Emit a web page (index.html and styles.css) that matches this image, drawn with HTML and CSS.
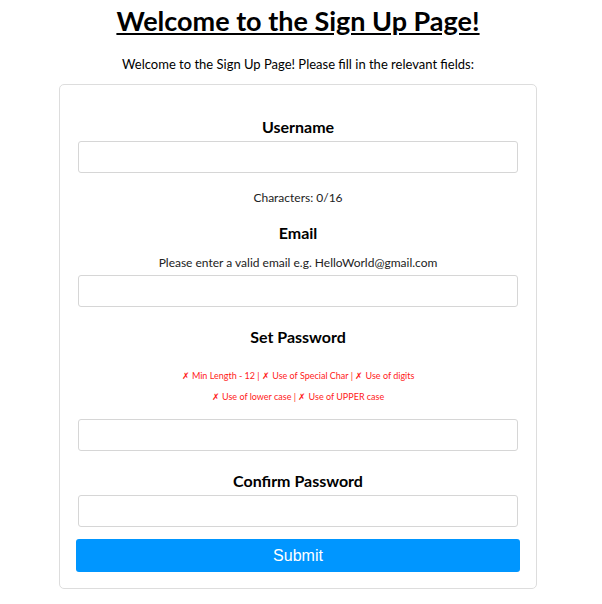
FILE: index.html
```html
<!DOCTYPE html>
<html lang="en">
<head>
    <meta charset="UTF-8">
    <meta name="viewport" content="width=device-width, initial-scale=1.0">
    <title>Sign Up</title>
    <link rel="stylesheet" href="styles.css">
</head>
<body>
    <h1>Welcome to the Sign Up Page!</h1>
    <p class="intro">Welcome to the Sign Up Page! Please fill in the relevant fields:</p>

    <form class="signup" onsubmit="return false">
        <label for="username" class="first">Username</label>
        <input type="text" id="username" name="username" maxlength="16">
        <p class="hint count">Characters: 0/16</p>

        <label for="email" class="gap-sm">Email</label>
        <p class="hint tip">Please enter a valid email e.g. HelloWorld@gmail.com</p>
        <input type="email" id="email" name="email" class="tight">

        <label for="password">Set Password</label>
        <div class="rules">
            <div>✗ Min Length - 12 | ✗ Use of Special Char | ✗ Use of digits</div>
            <div>✗ Use of lower case | ✗ Use of UPPER case</div>
        </div>
        <input type="password" id="password" name="password" class="after-rules">

        <label for="confirm">Confirm Password</label>
        <input type="password" id="confirm" name="confirm">

        <button type="submit">Submit</button>
    </form>
</body>
</html>
```

FILE: styles.css
```css
body {
    font-family: Lato, "Open Sans", sans-serif;
    margin: 0;
    padding: 0 6px 0 0;
    color: #000;
}
h1 {
    font-size: 27px;
    line-height: 42px;
    margin: 0;
    text-align: center;
    text-decoration: underline;
    font-weight: bold;
}
.intro {
    font-size: 13px;
    line-height: 20px;
    margin: 12px 0 0;
    text-align: center;
}
.signup {
    width: 444px;
    margin: 10px auto 0;
    padding: 16px;
    border: 1px solid #ddd;
    border-radius: 5px;
    display: flex;
    flex-direction: column;
}
.signup label {
    display: block;
    text-align: center;
    font-weight: bold;
    font-size: 16px;
    line-height: 20px;
    margin-top: 20px;
}
.signup label.first {
    margin-top: 16px;
}
.signup label.gap-sm {
    margin-top: 16px;
}
.signup input {
    box-sizing: border-box;
    height: 32px;
    margin: 4px 2px 0;
    padding: 4px 8px;
    border: 1px solid #d6d6d6;
    border-radius: 3px;
    font-size: 14px;
}
.signup input.tight {
    margin-top: 3px;
}
.signup input.after-rules {
    margin-top: 12px;
}
.hint {
    margin: 0;
    text-align: center;
    font-size: 12px;
    line-height: 18px;
    color: #222;
}
.count {
    margin-top: 16px;
}
.tip {
    margin-top: 11px;
}
.rules {
    margin-top: 18px;
    text-align: center;
    font-size: 9px;
    line-height: 21px;
    color: #ff1a1a;
}
button {
    margin-top: 12px;
    height: 33px;
    background-color: #0096ff;
    color: white;
    border: none;
    border-radius: 3px;
    font-family: "Liberation Sans", Arial, sans-serif;
    font-size: 16px;
    cursor: pointer;
}
```
